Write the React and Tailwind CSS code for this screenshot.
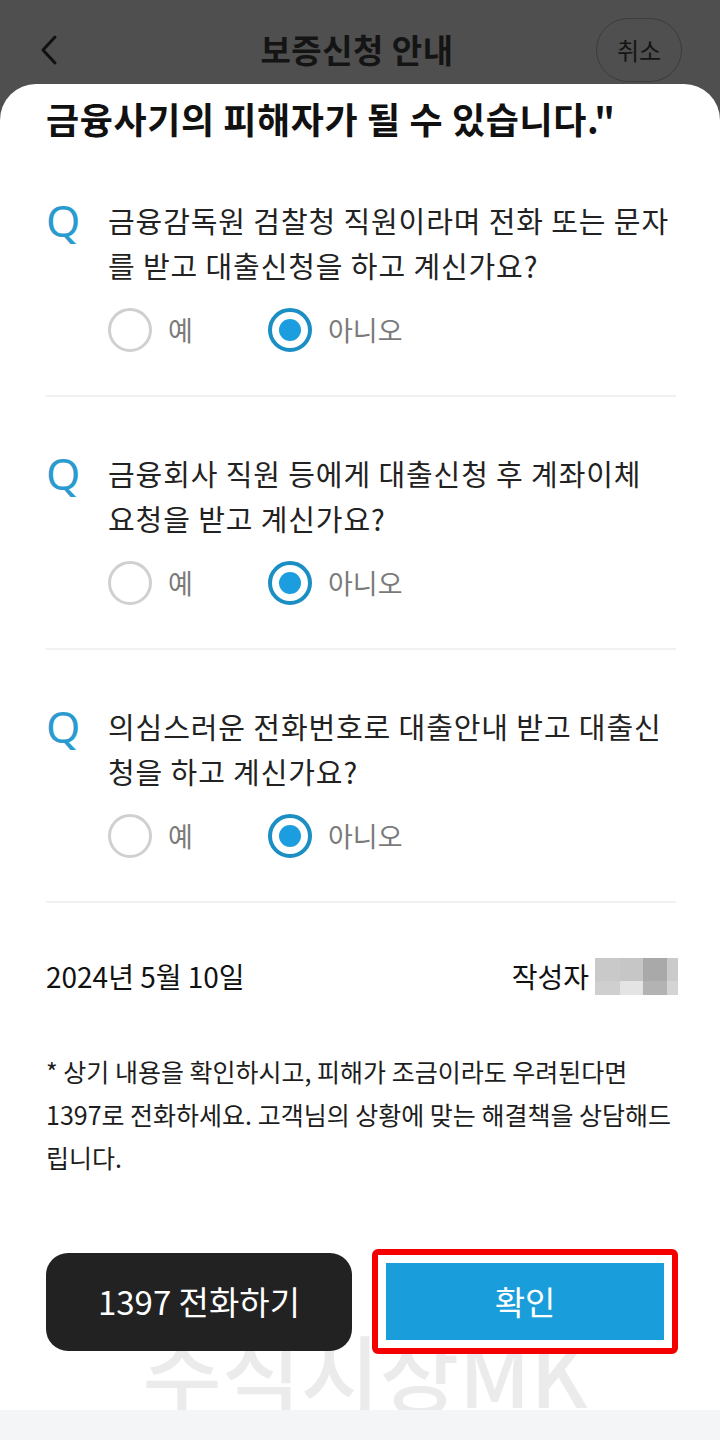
import React from 'react';

const questions = [
    ['금융감독원 검찰청 직원이라며 전화 또는 문자', '를 받고 대출신청을 하고 계신가요?'],
    ['금융회사 직원 등에게 대출신청 후 계좌이체', '요청을 받고 계신가요?'],
    ['의심스러운 전화번호로 대출안내 받고 대출신', '청을 하고 계신가요?'],
];

const font = { fontFamily: '"Noto Sans CJK KR", "Noto Sans", sans-serif' };

const Radio = ({ checked, label }) => (
    <div className="flex items-center gap-[16px]">
        {checked ? (
            <span className="w-[44px] h-[44px] rounded-full border-[4px] border-[#1b8ec3] flex items-center justify-center">
                <span className="w-[22px] h-[22px] rounded-full bg-[#1b9de0]" />
            </span>
        ) : (
            <span className="w-[44px] h-[44px] rounded-full border-[3px] border-[#d0d0d0]" />
        )}
        <span className="text-[27px] leading-[40px] text-[#7a7a7a]">{label}</span>
    </div>
);

const Question = ({ lines }) => (
    <div className="pt-[54px] pb-[43px] border-b-2 border-[#f1f1f1]">
        <div className="flex">
            <div className="w-[62px] shrink-0 text-[44px] leading-[45px] text-[#2a9bd0]" style={{ fontFamily: '"Noto Sans", sans-serif' }}>Q</div>
            <div className="text-[29px] leading-[45px] tracking-[0.9px] text-[#222] whitespace-nowrap">
                {lines[0]}<br />{lines[1]}
            </div>
        </div>
        <div className="flex mt-[20px] pl-[62px]">
            <div className="w-[160px]"><Radio label="예" /></div>
            <Radio checked label="아니오" />
        </div>
    </div>
);

export default function App() {
    return (
        <div className="min-h-[1440px] flex flex-col bg-[#4f4f4f]" style={font}>
            {/* Header (dimmed) */}
            <div className="h-[84px] pt-[18px] px-[38px] shrink-0">
                <div className="h-[64px] flex items-center justify-between">
                    <svg width="30" height="34" viewBox="0 0 30 34">
                        <path d="M17 4 L5 17 L17 30" fill="none" stroke="#111" strokeWidth="3" strokeLinecap="round" strokeLinejoin="round" />
                    </svg>
                    <div className="text-[33px] font-bold tracking-[0.5px] text-[#141414] ml-[50px]">보증신청 안내</div>
                    <div className="w-[86px] h-[64px] rounded-full border border-[#3c3c3c] flex items-center justify-center text-[24px] text-[#151515]">취소</div>
                </div>
            </div>

            {/* Sheet */}
            <div className="flex-1 flex flex-col bg-white rounded-t-[36px] relative">
                {/* watermark */}
                <div className="absolute left-0 right-0 bottom-[24px] flex justify-center pointer-events-none">
                    <span className="text-[86px] leading-[90px] font-medium text-[#ebebeb] ml-[10px]">주식시상MK</span>
                </div>

                <div className="pl-[46px] pr-[44px] relative">
                    <div className="pt-[12px] text-[36px] leading-[44px] font-bold tracking-[0.6px] text-[#111] whitespace-nowrap">금융사기의 피해자가 될 수 있습니다."</div>
                    <div className="mt-[4px]">
                        {questions.map((q, i) => (
                            <Question key={i} lines={q} />
                        ))}
                    </div>

                    <div className="pt-[53px] flex items-center justify-between">
                        <span className="text-[28px] leading-[40px] text-[#111]">2024년 5월 10일</span>
                        <div className="flex items-center gap-[6px] mr-[-2px]">
                            <span className="text-[28px] leading-[40px] text-[#111]">작성자</span>
                            <div className="grid grid-cols-[25px_23px_24px_11px] grid-rows-[23px_14px]">
                                <div className="bg-[#c9c9c9]" />
                                <div className="bg-[#c6c6c6]" />
                                <div className="bg-[#a9a9a9]" />
                                <div className="bg-[#cacaca]" />
                                <div className="bg-[#cfcfcf]" />
                                <div className="bg-[#e4e4e4]" />
                                <div className="bg-[#b3b3b3]" />
                                <div className="bg-[#d4d4d4]" />
                            </div>
                        </div>
                    </div>

                    <p className="mt-[54px] text-[25px] leading-[43px] text-[#1d1d1d] whitespace-nowrap">
                        * 상기 내용을 확인하시고, 피해가 조금이라도 우려된다면<br />
                        1397로 전화하세요. 고객님의 상황에 맞는 해결책을 상담해드<br />
                        립니다.
                    </p>

                    <div className="mt-[70px] flex items-center gap-[20px]">
                        <div className="w-[306px] shrink-0 h-[98px] rounded-[22px] bg-[#222222] flex items-center justify-center text-[33px] text-white">1397 전화하기</div>
                        <div className="w-[306px] shrink-0 h-[105px] rounded-[6px] border-[6px] border-[#f50000] bg-white p-[8px]">
                            <div className="h-full bg-[#1a9ddb] flex items-center justify-center text-[33px] text-white">확인</div>
                        </div>
                    </div>
                </div>

                <div className="flex-1" />
                <div className="h-[30px] bg-[#f4f5f7] relative" />
            </div>
        </div>
    );
}
